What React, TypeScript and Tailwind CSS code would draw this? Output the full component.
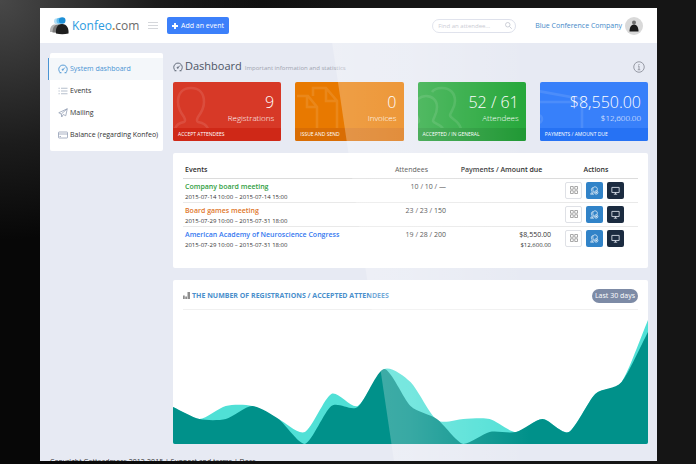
import type { ReactNode } from "react";

type Stat = { value: string; label: string; action: string; body: string; foot: string; art: ReactNode };

const stats: Stat[] = [
  {
    value: "9",
    label: "Registrations",
    action: "ACCEPT ATTENDEES",
    body: "bg-[#d73927]",
    foot: "bg-[#cf2817]",
    art: <path d="M2 47c1-4 4-6 9-7 2-1 1-3 0-5C8 31 5 27 5 20 5 11 10 6 18 6s13 5 13 14c0 7-3 11-6 15-1 2-2 4 0 5 5 1 9 3 10 7" />,
  },
  {
    value: "0",
    label: "Invoices",
    action: "ISSUE AND SEND",
    body: "bg-[#e87a00]",
    foot: "bg-[#d96d04]",
    art: (
      <>
        <path d="M2 14h11l9 11v22M12 14v11h10" />
        <path d="M18 14V6h13l11 13v28M31 6v13h11" />
      </>
    ),
  },
  {
    value: "52 / 61",
    label: "Attendees",
    action: "ACCEPTED / IN GENERAL",
    body: "bg-[#25a73a]",
    foot: "bg-[#1f9833]",
    art: (
      <>
        <path d="M-8 47c2-5 8-5 9-8 0-3-4-6-4-14 0-7 5-11 11-11s11 4 11 11c0 8-4 11-4 14 1 3 8 3 10 8" />
        <path d="M14 10c2-3 6-4 10-4 8 0 13 5 13 13 0 7-4 10-5 14 0 4 9 5 11 14" />
      </>
    ),
  },
  {
    value: "$8,550.00",
    label: "$12,600.00",
    action: "PAYMENTS / AMOUNT DUE",
    body: "bg-[#3880fa]",
    foot: "bg-[#2672f4]",
    art: (
      <>
        <path d="M-2 9l44 8v30M-2 20h44" />
        <circle cx="-2" cy="37" r="4" />
      </>
    ),
  },
];

const events = [
  { name: "Company board meeting", color: "text-[#2f9e41]", dates: "2015-07-14 10:00 – 2015-07-14 15:00", att: "10 / 10 / —", paid: "", due: "" },
  { name: "Board games meeting", color: "text-[#e0762a]", dates: "2015-07-29 10:00 – 2015-07-31 18:00", att: "23 / 23 / 150", paid: "", due: "" },
  { name: "American Academy of Neuroscience Congress", color: "text-[#3478f0]", dates: "2015-07-29 10:00 – 2015-07-31 18:00", att: "19 / 28 / 200", paid: "$8,550.00", due: "$12,600.00" },
];

const CHART_W = 475;
const CHART_H = 134;
const accepted = [37, 25, 25, 38, 25, 0, 38, 37, 75, 38, 25, 0, 12, 12, 25, 12, 50, 62, 112];
const registered = [37, 25, 38, 38, 25, 12, 50, 38, 75, 62, 24, 25, 25, 12, 25, 12, 50, 62, 124];

function area(values: number[]) {
  const step = CHART_W / (values.length - 1);
  const ys = values.map((v) => CHART_H - v);
  const slope = ys.map((y, i) => {
    const a = Math.max(0, i - 1);
    const b = Math.min(ys.length - 1, i + 1);
    return (ys[b] - ys[a]) / (b - a) / step;
  });
  const q = step / 4;
  let d = `M0 ${CHART_H}L0 ${ys[0]}`;
  for (let i = 1; i < ys.length; i++) {
    const x = i * step;
    const y1 = Math.min(CHART_H, ys[i - 1] + q * slope[i - 1]);
    const y2 = Math.min(CHART_H, ys[i] - q * slope[i]);
    d += `C${x - step + q} ${y1} ${x - q} ${y2} ${x} ${ys[i]}`;
  }
  return `${d}L${CHART_W} ${CHART_H}Z`;
}

function Gauge({ className }: { className: string }) {
  return (
    <svg viewBox="0 0 20 20" className={className} fill="none" stroke="currentColor" strokeWidth="1.8" aria-hidden="true">
      <path d="M5 17.5A8.5 8.5 0 1 1 15 17.5M3 17.5h4M13 17.5h4M9.500 11.500l4.500-4.500" />
      <circle cx="9.500" cy="11.500" r="1.200" />
    </svg>
  );
}

const navIcon = "h-[10px] w-[10px] shrink-0 text-[#8d9ab0]";

const nav = [
  {
    label: "Events",
    icon: (
      <svg viewBox="0 0 20 20" className={navIcon} fill="none" stroke="currentColor" strokeWidth="1.300" aria-hidden="true">
        <path d="M6 4.500h13M6 10h13M6 15.500h13M1 4.500h2.500M1 10h2.500M1 15.500h2.500" />
      </svg>
    ),
  },
  {
    label: "Mailing",
    icon: (
      <svg viewBox="0 0 20 20" className={navIcon} fill="none" stroke="currentColor" strokeWidth="1.500" strokeLinejoin="round" aria-hidden="true">
        <path d="M18.500 1.500L1.500 9.500l5 2.500L18.500 1.500l-3 14-5-2.500-3 5-1-6" />
      </svg>
    ),
  },
  {
    label: "Balance (regarding Konfeo)",
    icon: (
      <svg viewBox="0 0 20 20" className={navIcon} fill="none" stroke="currentColor" strokeWidth="1.500" aria-hidden="true">
        <rect x="1" y="4" width="18" height="12" rx="1" />
        <path d="M1 8h18M3 13h3" />
      </svg>
    ),
  },
];

function Logo() {
  return (
    <svg viewBox="0 0 20 18" className="h-[18px] w-5" aria-hidden="true">
      <circle cx="8" cy="4.200" r="3" fill="#b5def5" />
      <circle cx="10.500" cy="3.800" r="3" fill="#63bdec" />
      <path d="M1 14c0-4 2-6.500 5-6.500h4V15H1z" fill="#b4b4b4" />
      <path d="M3.500 15.500c0-5 2-8 6-8h4v8.500z" fill="#7a7a7a" />
      <circle cx="13.200" cy="3.500" r="3.300" fill="#1d8fd6" />
      <path d="M7 16.500c-.5-5 1-9.500 6-9.500 5 0 7 4.500 6.500 9.500-4 1-8.500 1-12.500 0z" fill="#1e1e1e" />
    </svg>
  );
}

const actionBase = "flex h-[17px] w-[17px] items-center justify-center rounded-[2px]";

function Actions() {
  return (
    <div className="flex gap-1 pl-[11px]">
      <button type="button" aria-label="Details" className={`${actionBase} border border-[#dfe1e6] bg-white text-[#8c8c8c]`}>
        <svg viewBox="0 0 16 16" className="h-2 w-2" fill="none" stroke="currentColor" strokeWidth="1.500">
          <path d="M1 1h5.500v5.500H1zM9.500 1H15v5.500H9.500zM1 9.500h5.500V15H1zM9.500 9.500H15V15H9.500z" />
        </svg>
      </button>
      <button type="button" aria-label="Attendees" className={`${actionBase} bg-[#3183c8] text-white`}>
        <svg viewBox="0 0 16 16" className="h-[9px] w-[9px]" fill="none" stroke="currentColor" strokeWidth="1.200">
          <path d="M1 14.500c0-2 3-2 3-3.500S2.500 9 2.500 6.500C2.500 4 4 3 5.500 3M1 14.500h6M6 11c1-1-1-2-1-5.500C5 3 6.500 1.500 9 1.500s4 1.500 4 4c0 1.500-.5 2.500-1 3.500M6 11l-2 3" />
          <circle cx="11" cy="11.500" r="3" />
          <path d="M11 10v3M9.500 11.500h3" />
        </svg>
      </button>
      <button type="button" aria-label="Website" className={`${actionBase} bg-[#1b2b40] text-[#dfe5ee]`}>
        <svg viewBox="0 0 16 16" className="h-[9px] w-[9px]" fill="none" stroke="currentColor" strokeWidth="1.500">
          <path d="M1.500 2.500h13v9h-13zM5 14.500h6M8 11.500v3" />
        </svg>
      </button>
    </div>
  );
}

export default function App() {
  return (
    <div className="flex h-screen flex-col overflow-hidden bg-[linear-gradient(90deg,#070707_6%,#151515_50%)] font-['Open_Sans',sans-serif] text-[7px] leading-[10px] text-[#333]">
      <div className="flex min-h-0 flex-1 flex-col bg-[radial-gradient(ellipse_260px_240px_at_0_0,#484848,#1c1c1c_60%,transparent)] pt-2 pr-[39px] pb-[3px] pl-10">
        <div className="relative flex min-h-0 flex-1 flex-col overflow-hidden bg-[#e7eaf3]">
          <header className="flex h-[35px] shrink-0 items-center bg-white pr-[14px] pl-[9px]">
            <a href="#home" className="flex w-[99px] items-center gap-[3px] text-[12px] leading-[18px] text-[#6b6b6b]">
              <Logo />
              <span>
                <span className="text-[#2b9be0]">Konfeo</span>
                <span className="font-bold text-[#c98a3c]">.</span>com
              </span>
            </a>
            <button type="button" aria-label="Toggle menu" className="flex w-[19px] flex-col gap-[2px] pr-[9px]">
              <span className="h-px w-full bg-[#d5d7db]" />
              <span className="h-px w-full bg-[#d5d7db]" />
              <span className="h-px w-full bg-[#d5d7db]" />
            </button>
            <button type="button" className="flex h-[17px] items-center gap-[3px] rounded-[2px] bg-[#3c80fa] px-[5px] text-white">
              <svg viewBox="0 0 10 10" className="h-[6px] w-[6px]" fill="none" stroke="currentColor" strokeWidth="3.200" aria-hidden="true">
                <path d="M5 0v10M0 5h10" />
              </svg>
              Add an event
            </button>
            <label className="ml-auto flex h-[14px] w-[84px] items-center rounded-full border border-[#dcdfea] pr-[3px] pl-[5px]">
              <span className="sr-only">Find an attendee</span>
              <input type="search" placeholder="Find an attendee..." className="min-w-0 flex-1 bg-transparent text-[6px] leading-[10px] outline-none placeholder:text-[#c3c5ce]" />
              <svg viewBox="0 0 14 14" className="h-[7px] w-[7px] shrink-0 text-[#b9bdc9]" fill="none" stroke="currentColor" strokeWidth="1.500" aria-hidden="true">
                <circle cx="5.500" cy="5.500" r="4.500" />
                <path d="M9 9l4.500 4.500" />
              </svg>
            </label>
            <a href="#account" className="ml-[19px] flex items-center gap-[3px] text-[#4389c8]">
              Blue Conference Company
              <svg viewBox="0 0 18 18" className="h-[18px] w-[18px]" aria-hidden="true">
                <circle cx="9" cy="9" r="9" fill="#d9d9d9" />
                <circle cx="9" cy="5.500" r="2" fill="#6e6e6e" />
                <path d="M4.500 14.500c0-4 1.500-7 4.500-7s4.500 3 4.500 7z" fill="#1a1a1a" />
              </svg>
            </a>
          </header>

          <div className="flex gap-[10px] pt-[10px] pr-[9px] pl-[10px]">
            <nav className="w-[113px] shrink-0 self-start rounded-[2px] bg-white py-[5px]">
              <a href="#dashboard" className="-ml-[2px] flex h-[22px] items-center gap-[2px] border-l border-[#4a94d4] bg-[#f4f7fa] pl-[9px] text-[#4a94d4]">
                <Gauge className="h-[10px] w-[10px] shrink-0" />
                System dashboard
              </a>
              {nav.map((item) => (
                <a key={item.label} href="#section" className="flex h-[22px] items-center gap-[2px] pl-2 whitespace-nowrap">
                  {item.icon}
                  {item.label}
                </a>
              ))}
            </nav>

            <main className="min-w-0 flex-1">
              <div className="flex h-[29px] items-center pb-[2px]">
                <Gauge className="h-[10px] w-[10px] text-[#586171]" />
                <h1 className="ml-[2px] flex items-baseline gap-[3px] text-[11px] leading-[14px] text-[#4d5565]">
                  Dashboard
                  <small className="text-[6px] text-[#a0a4b0]">Important information and statistics</small>
                </h1>
                <button type="button" aria-label="Information" className="mr-[3px] ml-auto text-[#8d919b]">
                  <svg viewBox="0 0 24 24" className="h-[12px] w-[12px]" fill="none" stroke="currentColor" strokeWidth="1.800">
                    <circle cx="12" cy="12" r="10.500" />
                    <path d="M10 10h2v7M9.500 17.500h5M12 6v2" />
                  </svg>
                </button>
              </div>

              <div className="grid grid-cols-4 gap-[14px]">
                {stats.map((s) => (
                  <section key={s.action} className={`overflow-hidden rounded-[2px] text-white ${s.body}`}>
                    <div className="relative h-[46px] overflow-hidden pt-[10px] pr-[7px] text-right">
                      <svg viewBox="0 0 48 46" className="absolute top-0 left-0 h-[46px] w-12 opacity-10" fill="none" stroke="white" strokeWidth="2.500" aria-hidden="true">
                        {s.art}
                      </svg>
                      <p className="relative text-[16px] leading-[21px] font-light">{s.value}</p>
                      <p className="relative text-[8px] leading-[10px] font-light">{s.label}</p>
                    </div>
                    <a href="#more" className={`block h-[13px] pl-[5px] text-[5px] leading-[13px] ${s.foot}`}>
                      {s.action}
                    </a>
                  </section>
                ))}
              </div>

              <section className="mt-3 rounded-[2px] bg-white px-[10px] pt-3 pb-[18px]">
                <table className="w-full table-fixed border-collapse">
                  <thead>
                    <tr className="h-[13px] border-b border-[#dcdcdc] align-top text-[#2f2f2f]">
                      <th className="pl-[2px] text-left font-semibold">Events</th>
                      <th className="w-[75px] font-medium">Attendees</th>
                      <th className="w-[105px] font-semibold">Payments / Amount due</th>
                      <th className="w-[84px] font-semibold">Actions</th>
                    </tr>
                  </thead>
                  <tbody>
                    {events.map((e) => (
                      <tr key={e.name} className="border-b border-[#e9e9e9] align-top last:border-b-0">
                        <td className="pt-[3px] pl-[2px]">
                          <a href="#event" className={`block font-semibold ${e.color}`}>
                            {e.name}
                          </a>
                          <span className="block text-[6px]">{e.dates}</span>
                        </td>
                        <td className="pt-[3px] pr-[3px] text-right">{e.att}</td>
                        <td className="pt-[3px] pr-[3px] text-right">
                          {e.paid}
                          <span className="block text-[6px]">{e.due}</span>
                        </td>
                        <td className="pt-[3px]">
                          <Actions />
                        </td>
                      </tr>
                    ))}
                  </tbody>
                </table>
              </section>

              <section className="mt-3 overflow-hidden rounded-[2px] bg-white">
                <div className="mx-[10px] flex h-[30px] items-center border-b border-[#f0f0f0] pt-[3px]">
                  <svg viewBox="0 0 14 14" className="h-[7px] w-[7px] text-[#8e8e8e]" fill="currentColor" aria-hidden="true">
                    <path d="M0 7h3.500v7H0zM4.500 9H8v5H4.500zM9 0h5v14H9z" />
                  </svg>
                  <h2 className="ml-[2px] font-bold text-[#4a8fcc]">THE NUMBER OF REGISTRATIONS / ACCEPTED ATTENDEES</h2>
                  <button type="button" className="ml-auto h-[14px] rounded-full bg-[#7d8ba6] px-[3px] text-white">
                    Last 30 days
                  </button>
                </div>
                <svg viewBox={`0 0 ${CHART_W} ${CHART_H}`} preserveAspectRatio="none" className="block h-[134px] w-full" role="img" aria-label="Registrations and accepted attendees">
                  <path d={area(registered)} fill="#50e0d6" />
                  <path d={area(accepted)} fill="#00918a" />
                </svg>
              </section>
            </main>
          </div>

          <footer className="shrink-0 pt-[13px] pl-[10px] whitespace-nowrap">Copyright Getteadmore 2012-2015 | Support and terms | Docs</footer>

          <svg viewBox="0 0 617 453" preserveAspectRatio="none" className="pointer-events-none absolute inset-0 h-full w-full" aria-hidden="true">
            <defs>
              <linearGradient id="sheen" gradientUnits="userSpaceOnUse" x1="290" y1="0" x2="490" y2="0">
                <stop offset="0" stopColor="white" stopOpacity="0.280" />
                <stop offset="0.400" stopColor="white" stopOpacity="0.220" />
                <stop offset="1" stopColor="white" stopOpacity="0" />
              </linearGradient>
            </defs>
            <path d="M287 0L354 453H617V0z" fill="url(#sheen)" />
          </svg>
        </div>
      </div>
    </div>
  );
}
